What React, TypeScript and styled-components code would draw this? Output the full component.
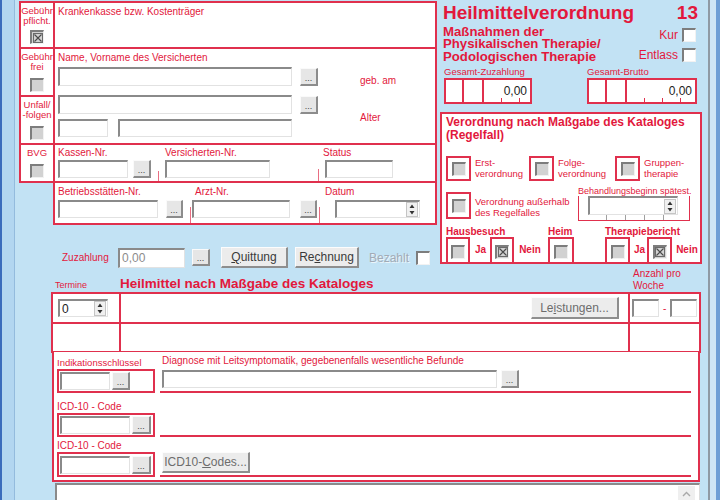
import styled, { createGlobalStyle } from 'styled-components'

const RED = '#e2183c'
const LINE = '#e0304d'
const SKY = '#c2e2f4'

const GlobalStyle = createGlobalStyle`
  html, body {
    margin: 0;
    padding: 0;
  }
  body {
    width: 720px;
    height: 500px;
    overflow: hidden;
    background: ${SKY};
    font-family: 'Liberation Sans', Arial, sans-serif;
  }
`

const Page = styled.div`
  display: flex;
  width: 720px;
  height: 500px;
  overflow: hidden;
  background: ${SKY};
`

const WindowEdge = styled.div`
  flex: none;
  width: 15px;
  background: linear-gradient(to right, #3a6cbc 0 2px, #b2d6f0 2px 14px, #93bbdd 14px 15px);
`

const ScrollEdge = styled.div`
  flex: none;
  width: 12px;
  background: linear-gradient(to right, #8f9aa4 0 2px, #cfe6f6 2px 8px, #6f9fd6 8px 12px);
`

const Main = styled.div`
  flex: 1;
  min-width: 0;
  padding: 2px 0 0 5px;
  display: flex;
  flex-direction: column;
`

const TopArea = styled.div`
  display: grid;
  grid-template-columns: 416px 263px;
  column-gap: 4px;
  height: 266px;
`

const LeftArea = styled.div`
  display: flex;
  flex-direction: column;
`

const FormGrid = styled.div`
  display: grid;
  grid-template-columns: 34px 382px;
  grid-template-rows: 46px 48px 48px 38px 42px;
`

const Cell = styled.div<{ $span?: number; $col?: number }>`
  box-sizing: border-box;
  min-width: 0;
  background: #fff;
  border: 1px solid ${LINE};
  box-shadow: 0 0 0 1px ${LINE};
  ${(p) => p.$span && `grid-row: span ${p.$span};`}
  ${(p) => p.$col && `grid-column: ${p.$col};`}
`

const FlagCell = styled(Cell)`
  display: flex;
  flex-direction: column;
  align-items: center;
  overflow: hidden;
  padding: 3px 0 3px;
`

const FlagLabel = styled.span`
  align-self: stretch;
  text-align: center;
  white-space: nowrap;
  font-size: 9.5px;
  line-height: 10px;
  color: ${RED};
`

const FlagCheck = styled.div`
  margin-top: auto;
  display: flex;
`

const PadCell = styled(Cell)<{ $top?: number }>`
  padding: ${(p) => p.$top ?? 2}px 0 0 3px;
  display: flex;
  flex-direction: column;
`

const FieldsCell = styled(Cell)<{ $top: number }>`
  padding: ${(p) => p.$top}px 0 0 3px;
  display: flex;
  align-items: flex-start;
`

const Caption = styled.span<{ $size?: number; $pad?: number }>`
  display: block;
  white-space: nowrap;
  font-size: ${(p) => p.$size ?? 10}px;
  line-height: 12px;
  padding-left: ${(p) => p.$pad ?? 0}px;
  color: ${RED};
`

const Field = styled.div<{ $ml?: number }>`
  display: flex;
  flex-direction: column;
  margin-left: ${(p) => p.$ml ?? 0}px;
`

const InputRow = styled.div<{ $gap?: number; $mt?: number; $ml?: number }>`
  display: flex;
  align-items: center;
  gap: ${(p) => p.$gap ?? 6}px;
  margin-top: ${(p) => p.$mt ?? 0}px;
  margin-left: ${(p) => p.$ml ?? 0}px;
`

const Tick = styled.span<{ $ml: number; $h?: number }>`
  flex: none;
  align-self: flex-end;
  width: 1px;
  height: ${(p) => p.$h ?? 10}px;
  margin-left: ${(p) => p.$ml}px;
  background: ${LINE};
  opacity: 0.7;
`

const Edit = styled.div<{ $w: number; $h?: number; $grey?: boolean }>`
  box-sizing: border-box;
  flex: none;
  display: flex;
  align-items: center;
  justify-content: space-between;
  width: ${(p) => p.$w}px;
  height: ${(p) => p.$h ?? 18}px;
  padding: 0 1px 0 2px;
  background: #fff;
  border-style: solid;
  border-width: 2px 1px 1px 2px;
  border-color: #8a8a8a #e2e2e2 #e2e2e2 #8a8a8a;
  font-size: 12px;
  color: ${(p) => (p.$grey ? '#8c8c8c' : '#222')};
`

const Dots = styled.button<{ $w?: number; $h?: number; $ml?: number }>`
  box-sizing: border-box;
  flex: none;
  width: ${(p) => p.$w ?? 18}px;
  height: ${(p) => p.$h ?? 18}px;
  margin-left: ${(p) => p.$ml ?? 0}px;
  padding: 0 0 1px;
  display: flex;
  align-items: flex-end;
  justify-content: center;
  background: #e6e6e6;
  border-style: solid;
  border-width: 1px 2px 2px 1px;
  border-color: #fafafa #8c8c8c #8c8c8c #fafafa;
  font: 9px 'Liberation Sans', Arial, sans-serif;
  line-height: 9px;
  color: #444;
`

const WinButton = styled.button<{ $w: number; $h?: number; $ml?: number; $muted?: boolean }>`
  box-sizing: border-box;
  flex: none;
  width: ${(p) => p.$w}px;
  height: ${(p) => p.$h ?? 21}px;
  margin-left: ${(p) => p.$ml ?? 0}px;
  padding: 0;
  background: #ececec;
  border-style: solid;
  border-width: 1px 2px 2px 1px;
  border-color: #fcfcfc #8e8e8e #8e8e8e #fcfcfc;
  font: 12px 'Liberation Sans', Arial, sans-serif;
  color: ${(p) => (p.$muted ? '#6c6c6c' : '#3a3a3a')};
`

const CheckBox = styled.span<{ $white?: boolean }>`
  box-sizing: border-box;
  flex: none;
  display: inline-flex;
  align-items: center;
  justify-content: center;
  width: 14px;
  height: 14px;
  background: ${(p) => (p.$white ? '#fff' : '#d2d2d2')};
  border-style: solid;
  border-width: 2px 1px 1px 2px;
  border-color: #7d7d7d #f2f2f2 #f2f2f2 #7d7d7d;
`

function Check({ checked, white }: { checked?: boolean; white?: boolean }) {
  return (
    <CheckBox $white={white}>
      {checked && (
        <svg width="10" height="10" viewBox="0 0 10 10">
          <rect x="0.5" y="0.5" width="9" height="9" fill="none" stroke="#6a6a6a" />
          <path d="M1.5 1.5 L8.5 8.5 M8.5 1.5 L1.5 8.5" stroke="#4a4a4a" strokeWidth="1.1" />
        </svg>
      )}
    </CheckBox>
  )
}

const SpinBox = styled.span`
  flex: none;
  display: flex;
  align-items: center;
  justify-content: center;
  width: 10px;
  height: 13px;
  background: #f0f0f0;
  border: 1px solid #c4c4c4;
`

function Spinner() {
  return (
    <SpinBox>
      <svg width="6" height="11" viewBox="0 0 6 11">
        <path d="M3 0.5 L5.5 4 L0.5 4 Z M3 10.5 L5.5 7 L0.5 7 Z" fill="#333" />
      </svg>
    </SpinBox>
  )
}

const SideLabel = styled.span<{ $ml: number; $shift: number }>`
  font-size: 10px;
  color: ${RED};
  margin-left: ${(p) => p.$ml}px;
  transform: translateY(${(p) => p.$shift}px);
`

const ZuzRow = styled.div`
  display: flex;
  align-items: center;
  height: 21px;
  margin-top: 23px;
  padding-left: 42px;
`

const ZuzLabel = styled(Caption)`
  width: 56px;
`

const Disabled = styled.span`
  margin-left: 10px;
  font-size: 12px;
  color: #a2abb6;
  text-shadow: 1px 1px 0 #eaf5fb;
`

const PaidCheck = styled.span`
  display: flex;
  margin-left: 7px;
`

/* right panel */

const RightPanel = styled.div`
  display: flex;
  flex-direction: column;
`

const TitleRow = styled.div`
  display: flex;
  justify-content: space-between;
  padding: 0 5px 0 3px;
  height: 23px;
`

const BigTitle = styled.span`
  font-weight: bold;
  font-size: 19px;
  line-height: 22px;
  color: ${RED};
`

const SubRow = styled.div`
  display: flex;
  justify-content: space-between;
  padding: 1px 7px 0 3px;
`

const SubTitle = styled.div`
  font-weight: bold;
  font-size: 13.2px;
  line-height: 12.4px;
  color: ${RED};
`

const OptionsCol = styled.div`
  display: flex;
  flex-direction: column;
  align-items: flex-end;
  gap: 6px;
  padding-top: 2px;
`

const SmallOpt = styled.div`
  display: flex;
  align-items: center;
  gap: 4px;
  font-size: 12px;
  line-height: 14px;
  color: ${RED};
`

const SumRow = styled.div`
  display: flex;
  margin-top: 3px;
  padding-left: 4px;
`

const SumField = styled.div<{ $ml?: number }>`
  display: flex;
  flex-direction: column;
  margin-left: ${(p) => p.$ml ?? 0}px;
`

const SumBox = styled.div<{ $w: number }>`
  box-sizing: border-box;
  display: flex;
  width: ${(p) => p.$w}px;
  height: 26px;
  background: #fff;
  border: 2px solid ${LINE};
`

const SumSeg = styled.span<{ $w: number }>`
  flex: none;
  width: ${(p) => p.$w}px;
  border-right: 2px solid ${LINE};
`

const SumValue = styled.span`
  flex: 1;
  display: flex;
  align-items: center;
  justify-content: flex-end;
  padding-right: 3px;
  font-size: 12px;
  color: #222;
  background: repeating-linear-gradient(to right, transparent 0 17px, ${LINE} 17px 18px) bottom / 100% 4px
    no-repeat;
`

const RegelBox = styled.div`
  box-sizing: border-box;
  display: flex;
  flex-direction: column;
  width: 262px;
  height: 152px;
  margin-top: 8px;
  padding: 2px 0 0 4px;
  background: #fff;
  border: 2px solid ${LINE};
`

const RegelTitle = styled.div`
  font-weight: bold;
  font-size: 12px;
  line-height: 12.5px;
  color: ${RED};
`

const OptRow = styled.div<{ $mt?: number }>`
  display: flex;
  margin-top: ${(p) => p.$mt ?? 0}px;
`

const OptItem = styled.div<{ $w?: number; $mt?: number }>`
  display: flex;
  align-items: flex-start;
  gap: 4px;
  width: ${(p) => (p.$w ? `${p.$w}px` : 'auto')};
  margin-top: ${(p) => p.$mt ?? 0}px;
`

const OptFrame = styled.span<{ $h?: number; $open?: boolean; $w?: number; $ml?: number }>`
  box-sizing: border-box;
  flex: none;
  display: flex;
  align-items: center;
  justify-content: center;
  width: ${(p) => p.$w ?? 25}px;
  height: ${(p) => p.$h ?? 25}px;
  margin-left: ${(p) => p.$ml ?? 0}px;
  border: 2px solid ${LINE};
  ${(p) => p.$open && 'border-bottom: none; padding-top: 2px;'}
`

const OptText = styled.span<{ $mt?: number }>`
  font-size: 9.5px;
  line-height: 11px;
  margin-top: ${(p) => p.$mt ?? 1}px;
  color: ${RED};
  white-space: nowrap;
`

const BeginGroup = styled.div`
  display: flex;
  flex-direction: column;
  margin-top: 5px;
`

const BeginLabel = styled(Caption)`
  line-height: 10px;
`

const Bracket = styled.div`
  box-sizing: border-box;
  width: 112px;
  height: 25px;
  padding-left: 9px;
  border: 1px solid ${LINE};
  border-top: none;
  background: repeating-linear-gradient(to right, transparent 0 18px, #a0a0a0 18px 19px) 9px bottom / 90px 5px
    no-repeat;
`

const BottomRow = styled.div`
  display: flex;
  margin-top: auto;
`

const Group = styled.div<{ $w?: number }>`
  display: flex;
  flex-direction: column;
  width: ${(p) => (p.$w ? `${p.$w}px` : 'auto')};
`

const GroupTitle = styled.span`
  font-weight: bold;
  font-size: 10px;
  line-height: 11px;
  color: ${RED};
`

const Pair = styled.div`
  display: flex;
  align-items: center;
`

const PairText = styled.span<{ $ml: number }>`
  margin-left: ${(p) => p.$ml}px;
  font-weight: bold;
  font-size: 10px;
  color: ${RED};
`

/* lower area */

const LowerArea = styled.div`
  flex: 1;
  display: flex;
  flex-direction: column;
  width: 648px;
  margin-left: 32px;
`

const TableCols = styled.div`
  display: grid;
  grid-template-columns: 68px 509px 71px;
`

const HeadRow = styled(TableCols)`
  height: 25px;
  align-items: end;
`

const HeadCaption = styled(Caption)<{ $lh?: number }>`
  line-height: ${(p) => p.$lh ?? 12}px;
  margin-bottom: 2px;
`

const HeadTitle = styled.span`
  font-weight: bold;
  font-size: 13.5px;
  line-height: 15px;
  margin-bottom: 2px;
  color: ${RED};
`

const Table = styled(TableCols)`
  grid-template-rows: 30px 29px;
`

const TCell = styled(Cell)<{ $justify?: string; $pl?: number; $pr?: number; $gap?: number }>`
  display: flex;
  align-items: center;
  justify-content: ${(p) => p.$justify ?? 'flex-start'};
  gap: ${(p) => p.$gap ?? 0}px;
  padding: 0 ${(p) => p.$pr ?? 0}px 0 ${(p) => p.$pl ?? 0}px;
`

const Dash = styled.span`
  font-size: 10px;
  color: ${RED};
`

const IndBox = styled.div`
  box-sizing: border-box;
  height: 130px;
  padding: 0 0 0 3px;
  background: #fff;
  border: 2px solid ${LINE};
  border-top: none;
  display: grid;
  grid-template-columns: 98px 531px;
  grid-template-rows: 41px 44px 40px;
  column-gap: 5px;
`

const IndLeft = styled.div`
  display: flex;
  flex-direction: column;
  justify-content: flex-end;
`

const IndFrame = styled.div<{ $h: number }>`
  box-sizing: border-box;
  display: flex;
  align-items: center;
  gap: 2px;
  height: ${(p) => p.$h}px;
  padding-left: 1px;
  border: 2px solid ${LINE};
`

const IndRight = styled.div<{ $pb: number }>`
  display: flex;
  flex-direction: column;
  justify-content: flex-end;
  padding: 0 0 ${(p) => p.$pb}px 2px;
  border-bottom: 2px solid ${LINE};
`

const Notes = styled.div`
  box-sizing: border-box;
  flex: 1;
  display: flex;
  justify-content: flex-end;
  margin: 1px 0 0 3px;
  padding: 1px 4px 0 0;
  background: #fff;
  border-style: solid;
  border-width: 2px 1px 0 2px;
  border-color: #8a8a8a #dcdcdc #dcdcdc #8a8a8a;
`

const ScrollUp = styled.span`
  display: flex;
  align-items: center;
  justify-content: center;
  width: 17px;
  height: 16px;
  background: #efefef;
`

export default function App() {
  return (
    <>
      <GlobalStyle />
      <Page>
        <WindowEdge />
        <Main>
          <TopArea>
            <LeftArea>
              <FormGrid>
                <FlagCell>
                  <FlagLabel>
                    Gebühr
                    <br />
                    pflicht.
                  </FlagLabel>
                  <FlagCheck>
                    <Check checked />
                  </FlagCheck>
                </FlagCell>
                <PadCell $top={3}>
                  <Caption>Krankenkasse bzw. Kostenträger</Caption>
                </PadCell>

                <FlagCell>
                  <FlagLabel>
                    Gebühr
                    <br />
                    frei
                  </FlagLabel>
                  <FlagCheck>
                    <Check />
                  </FlagCheck>
                </FlagCell>
                <PadCell $span={2} $top={3}>
                  <Caption>Name, Vorname des Versicherten</Caption>
                  <InputRow $gap={8} $mt={3}>
                    <Edit $w={234} $h={19} />
                    <Dots>...</Dots>
                    <SideLabel $ml={34} $shift={4}>
                      geb. am
                    </SideLabel>
                  </InputRow>
                  <InputRow $gap={8} $mt={9}>
                    <Edit $w={234} $h={19} />
                    <Dots>...</Dots>
                    <SideLabel $ml={34} $shift={13}>
                      Alter
                    </SideLabel>
                  </InputRow>
                  <InputRow $gap={10} $mt={5}>
                    <Edit $w={50} />
                    <Edit $w={174} />
                  </InputRow>
                </PadCell>

                <FlagCell>
                  <FlagLabel>
                    Unfall/
                    <br />
                    -folgen
                  </FlagLabel>
                  <FlagCheck>
                    <Check />
                  </FlagCheck>
                </FlagCell>

                <FlagCell>
                  <FlagLabel>BVG</FlagLabel>
                  <FlagCheck>
                    <Check />
                  </FlagCheck>
                </FlagCell>
                <FieldsCell $top={2}>
                  <Field>
                    <Caption>Kassen-Nr.</Caption>
                    <InputRow $gap={5} $mt={1}>
                      <Edit $w={70} />
                      <Dots>...</Dots>
                    </InputRow>
                  </Field>
                  <Tick $ml={7} />
                  <Field $ml={6}>
                    <Caption>Versicherten-Nr.</Caption>
                    <InputRow $mt={1}>
                      <Edit $w={105} />
                    </InputRow>
                  </Field>
                  <Tick $ml={48} $h={12} />
                  <Field $ml={4}>
                    <Caption>Status</Caption>
                    <InputRow $mt={1} $ml={2}>
                      <Edit $w={68} />
                    </InputRow>
                  </Field>
                </FieldsCell>

                <FieldsCell $col={2} $top={3}>
                  <Field>
                    <Caption>Betriebsstätten-Nr.</Caption>
                    <InputRow $gap={8} $mt={2}>
                      <Edit $w={100} />
                      <Dots $w={17}>...</Dots>
                    </InputRow>
                  </Field>
                  <Tick $ml={7} $h={16} />
                  <Field $ml={1}>
                    <Caption $pad={3}>Arzt-Nr.</Caption>
                    <InputRow $gap={10} $mt={2}>
                      <Edit $w={98} />
                      <Dots $w={17}>...</Dots>
                    </InputRow>
                  </Field>
                  <Tick $ml={2} $h={16} />
                  <Field $ml={5}>
                    <Caption>Datum</Caption>
                    <InputRow $mt={2} $ml={10}>
                      <Edit $w={85}>
                        <span />
                        <Spinner />
                      </Edit>
                    </InputRow>
                  </Field>
                </FieldsCell>
              </FormGrid>

              <ZuzRow>
                <ZuzLabel>Zuzahlung</ZuzLabel>
                <Edit $w={67} $h={20} $grey>
                  0,00
                </Edit>
                <Dots $ml={7} $h={17}>
                  ...
                </Dots>
                <WinButton $w={67} $ml={11}>
                  <u>Q</u>uittung
                </WinButton>
                <WinButton $w={64} $ml={7}>
                  Re<u>c</u>hnung
                </WinButton>
                <Disabled>Bezahlt</Disabled>
                <PaidCheck>
                  <Check white />
                </PaidCheck>
              </ZuzRow>
            </LeftArea>

            <RightPanel>
              <TitleRow>
                <BigTitle>Heilmittelverordnung</BigTitle>
                <BigTitle>13</BigTitle>
              </TitleRow>
              <SubRow>
                <SubTitle>
                  Maßnahmen der
                  <br />
                  Physikalischen Therapie/
                  <br />
                  Podologischen Therapie
                </SubTitle>
                <OptionsCol>
                  <SmallOpt>
                    Kur <Check white />
                  </SmallOpt>
                  <SmallOpt>
                    Entlass <Check white />
                  </SmallOpt>
                </OptionsCol>
              </SubRow>

              <SumRow>
                <SumField>
                  <Caption $size={9.5}>Gesamt-Zuzahlung</Caption>
                  <SumBox $w={88}>
                    <SumSeg $w={16} />
                    <SumSeg $w={18} />
                    <SumValue>0,00</SumValue>
                  </SumBox>
                </SumField>
                <SumField $ml={55}>
                  <Caption $size={9.5}>Gesamt-Brutto</Caption>
                  <SumBox $w={110}>
                    <SumSeg $w={16} />
                    <SumSeg $w={18} />
                    <SumValue>0,00</SumValue>
                  </SumBox>
                </SumField>
              </SumRow>

              <RegelBox>
                <RegelTitle>
                  Verordnung nach Maßgabe des Kataloges
                  <br />
                  (Regelfall)
                </RegelTitle>

                <OptRow $mt={15}>
                  <OptItem $w={83}>
                    <OptFrame>
                      <Check />
                    </OptFrame>
                    <OptText>
                      Erst-
                      <br />
                      verordnung
                    </OptText>
                  </OptItem>
                  <OptItem $w={86}>
                    <OptFrame>
                      <Check />
                    </OptFrame>
                    <OptText>
                      Folge-
                      <br />
                      verordnung
                    </OptText>
                  </OptItem>
                  <OptItem>
                    <OptFrame>
                      <Check />
                    </OptFrame>
                    <OptText>
                      Gruppen-
                      <br />
                      therapie
                    </OptText>
                  </OptItem>
                </OptRow>

                <OptRow>
                  <OptItem $w={132} $mt={11}>
                    <OptFrame $h={27}>
                      <Check />
                    </OptFrame>
                    <OptText $mt={4}>
                      Verordnung außerhalb
                      <br />
                      des Regelfalles
                    </OptText>
                  </OptItem>
                  <BeginGroup>
                    <BeginLabel $size={9}>Behandlungsbeginn spätest.</BeginLabel>
                    <Bracket>
                      <Edit $w={90} $h={19}>
                        <span />
                        <Spinner />
                      </Edit>
                    </Bracket>
                  </BeginGroup>
                </OptRow>

                <BottomRow>
                  <Group $w={102}>
                    <GroupTitle>Hausbesuch</GroupTitle>
                    <Pair>
                      <OptFrame $open $w={24}>
                        <Check />
                      </OptFrame>
                      <PairText $ml={5}>Ja</PairText>
                      <OptFrame $open $w={24} $ml={4}>
                        <Check checked />
                      </OptFrame>
                      <PairText $ml={5}>Nein</PairText>
                    </Pair>
                  </Group>
                  <Group $w={57}>
                    <GroupTitle>Heim</GroupTitle>
                    <Pair>
                      <OptFrame $open $w={26}>
                        <Check />
                      </OptFrame>
                    </Pair>
                  </Group>
                  <Group>
                    <GroupTitle>Therapiebericht</GroupTitle>
                    <Pair>
                      <OptFrame $open>
                        <Check />
                      </OptFrame>
                      <PairText $ml={4}>Ja</PairText>
                      <OptFrame $open $ml={2}>
                        <Check checked />
                      </OptFrame>
                      <PairText $ml={4}>Nein</PairText>
                    </Pair>
                  </Group>
                </BottomRow>
              </RegelBox>
            </RightPanel>
          </TopArea>

          <LowerArea>
            <HeadRow>
              <HeadCaption $size={9} $pad={3}>
                Termine
              </HeadCaption>
              <HeadTitle>Heilmittel nach Maßgabe des Kataloges</HeadTitle>
              <HeadCaption $pad={4} $lh={11.5}>
                Anzahl pro
                <br />
                Woche
              </HeadCaption>
            </HeadRow>

            <Table>
              <TCell $pl={5}>
                <Edit $w={50}>
                  0
                  <Spinner />
                </Edit>
              </TCell>
              <TCell $justify="flex-end" $pr={9}>
                <WinButton $w={88} $h={22} $muted>
                  Le<u>i</u>stungen...
                </WinButton>
              </TCell>
              <TCell $pl={2} $gap={4}>
                <Edit $w={27} />
                <Dash>-</Dash>
                <Edit $w={27} />
              </TCell>
              <TCell />
              <TCell />
              <TCell />
            </Table>

            <IndBox>
              <IndLeft>
                <Caption $size={9.5}>Indikationsschlüssel</Caption>
                <IndFrame $h={24}>
                  <Edit $w={50} />
                  <Dots>...</Dots>
                </IndFrame>
              </IndLeft>
              <IndRight $pb={3}>
                <Caption>Diagnose mit Leitsymptomatik, gegebenenfalls wesentliche Befunde</Caption>
                <InputRow $gap={4} $mt={3}>
                  <Edit $w={335} />
                  <Dots>...</Dots>
                </InputRow>
              </IndRight>

              <IndLeft>
                <Caption>ICD-10 - Code</Caption>
                <IndFrame $h={24}>
                  <Edit $w={70} />
                  <Dots $w={19}>...</Dots>
                </IndFrame>
              </IndLeft>
              <IndRight $pb={0} />

              <IndLeft>
                <Caption>ICD-10 - Code</Caption>
                <IndFrame $h={25}>
                  <Edit $w={70} />
                  <Dots $w={19}>...</Dots>
                </IndFrame>
              </IndLeft>
              <IndRight $pb={2}>
                <WinButton $w={88} $muted>
                  ICD10-<u>C</u>odes...
                </WinButton>
              </IndRight>
            </IndBox>

            <Notes>
              <ScrollUp>
                <svg width="9" height="6" viewBox="0 0 9 6">
                  <path d="M1 5 L4.5 1.5 L8 5" fill="none" stroke="#a8a8a8" strokeWidth="1.4" />
                </svg>
              </ScrollUp>
            </Notes>
          </LowerArea>
        </Main>
        <ScrollEdge />
      </Page>
    </>
  )
}
